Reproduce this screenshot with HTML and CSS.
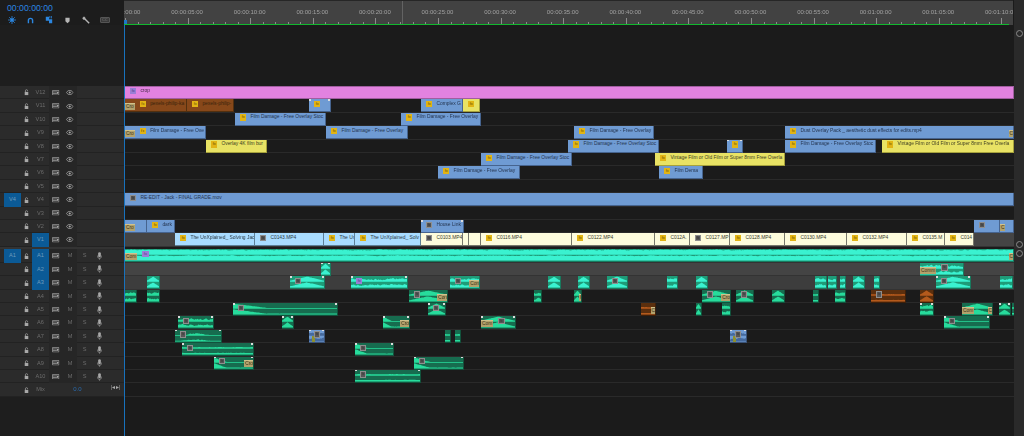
FILE: index.html
```html
<!doctype html>
<html>
  <head>
    <meta charset="utf-8">
    <title>Timeline</title>
    <link rel="stylesheet" href="styles.css">
  </head>
  <body>
    <svg class="sprites" width="0" height="0">
      <symbol id="i_lock" viewBox="0 0 7 9">
        <path d="M2 4.5V2.4a1.5 1.5 0 0 1 3 0V3" fill="none" stroke="currentColor"/>
        <rect x="1" y="4" width="5" height="4.6" fill="currentColor"/>
      </symbol>
      <symbol id="i_film" viewBox="0 0 9 7">
        <path d="M.5 .5h8v6h-8zM.5 2.5h5.5M.5 4.5h5.5" fill="none" stroke="currentColor" stroke-width=".9"/>
        <path d="M6 1.5l2.5 2-2.5 2z" fill="currentColor"/>
      </symbol>
      <symbol id="i_eye" viewBox="0 0 9 6">
        <path d="M.5 3C2 1 3 .5 4.5 .5S7 1 8.5 3C7 5 6 5.5 4.5 5.5S2 5 .5 3z" fill="none" stroke="currentColor"/>
        <circle cx="4.5" cy="3" r="1.3" fill="currentColor"/>
      </symbol>
      <symbol id="i_mic" viewBox="0 0 6 9">
        <rect x="1.4" y="0" width="3.2" height="6" rx="1.5" fill="currentColor"/>
        <path d="M.6 4v1a2.4 2.4 0 0 0 4.8 0V4M3 7.4V9" fill="none" stroke="currentColor" stroke-width=".7"/>
      </symbol>
    </svg>

    <div class="timeline">
      <div class="ctl">
        <div class="timecode">00:00:00:00</div>
        <div class="tools">
          <svg class="tool tool_big on" viewBox="0 0 10 10"><path d="M5 0v10M0 5h10M1.5 1.5l7 7M8.5 1.5l-7 7" stroke="currentColor" fill="none"/><rect x="3" y="3" width="4" height="4" fill="currentColor"/></svg>
          <svg class="tool on" viewBox="0 0 10 10"><path d="M2 9V5a3 3 0 0 1 6 0v4" stroke="currentColor" stroke-width="2" fill="none"/></svg>
          <svg class="tool tool_big on" viewBox="0 0 10 10"><path d="M1 1h4v5H1zM5 4h4v5H5z" fill="currentColor"/><path d="M6 0v3M8 0v3" stroke="currentColor"/></svg>
          <svg class="tool" viewBox="0 0 10 10"><path d="M2 1h6v5L5 9 2 6z" fill="currentColor"/></svg>
          <svg class="tool tool_big" viewBox="0 0 10 10"><path d="M1 2.5L2.5 1 4 2.5 3 4 1.5 4z" fill="currentColor" stroke="currentColor"/><path d="M3 3l6 6" stroke="currentColor" stroke-width="1.8"/></svg>
          <span class="tool_cc">CC</span>
        </div>
      </div>
      <div class="ruler">
        <div class="ruler_labels" id="ruler_labels"></div>
        <div class="work_mark"></div>
        <div class="ruler_ticks"></div>
        <div class="in_bar"></div>
        <div class="head_mark"></div>
      </div>
      <div class="vbar_top"></div>

      <div class="heads" id="heads"></div>
      <div class="lanes" id="lanes">
        <div class="playhead"></div>
      </div>
      <div class="vbar">
        <span class="knob knob_a"></span>
        <span class="knob knob_b"></span>
        <span class="knob knob_c"></span>
      </div>
    </div>
    <script src="timeline.js"></script>
  </body>
</html>
```

FILE: styles.css
```css
body {
  margin: 0;
  background: #1b1b1b;
  font-family: 'Liberation Sans', Arial, sans-serif;
  overflow: hidden;
}
.sprites {
  position: absolute;
}
.timeline {
  position: relative;
  display: grid;
  grid-template-columns: 124px 890px 10px;
  grid-template-rows: 25px 411px;
  height: 436px;
  overflow: hidden;
  filter: blur(0.3px);
}

/* top left controls */
.ctl {
  background: #1c1c1c;
  padding: 4px 0 0 7px;
}
.timecode {
  font-size: 8.7px;
  line-height: 9px;
  color: #2b86e0;
}
.tools {
  display: flex;
  align-items: center;
  gap: 11.6px;
  margin: 3px 0 0 1px;
}
.tool {
  width: 7px;
  height: 7px;
  color: #b5b5b5;
}
.tool_big {
  width: 8px;
  height: 8px;
  margin: 0 -0.5px;
}
.tool.on {
  color: #2b86e0;
}
.tool_cc {
  border: 1px solid #555;
  border-radius: 1px;
  background: #3a3a3a;
  color: #777;
  font-size: 4px;
  line-height: 4px;
  padding: 0 1px;
  margin-left: -1px;
}

/* ruler */
.ruler {
  position: relative;
  background: #424242;
  border-top: 1px solid #262626;
  overflow: hidden;
  margin-right: 1px;
}
.ruler_labels {
  display: flex;
  margin: 8px 0 0 -30.8px;
}
.ruler_labels span {
  flex: 0 0 62.6px;
  text-align: center;
  font-size: 6px;
  line-height: 7px;
  color: #a2a2a2;
}
.ruler_ticks {
  position: absolute;
  left: 0;
  right: 0;
  bottom: 1px;
  height: 6px;
  background-image:
    repeating-linear-gradient(90deg, #8c8c8c 0 1px, transparent 1px 62.6px),
    repeating-linear-gradient(90deg, #8c8c8c 0 1px, transparent 1px 12.52px);
  background-size: 100% 6px, 100% 2.5px;
  background-position: 0.5px 0, 0.5px bottom;
  background-repeat: no-repeat;
}
.in_bar {
  position: absolute;
  left: 0;
  right: 4px;
  bottom: 0;
  height: 1px;
  background: #12b82f;
}
.work_mark {
  position: absolute;
  left: 278px;
  top: 0;
  bottom: 1px;
  width: 1px;
  background: #636363;
}
.head_mark {
  position: absolute;
  left: 0;
  bottom: 1px;
  width: 3px;
  height: 4px;
  background: #1e78c8;
}

/* track headers */
.heads {
  padding-top: 61px;
  background: #1e1e1e;
}
.head {
  display: grid;
  grid-template-columns: 4px 17px 11px 17px 14px 14px 15px 14px 18px;
  height: 13.4px;
  background: #2b2b2b;
  box-shadow: inset 0 -1px 0 #222;
  color: #6c6c6c;
  font-size: 5.6px;
  line-height: 13px;
  text-align: center;
}
.head_gap {
  height: 2.7px;
  background: #333;
}
.cell {
  display: flex;
  align-items: center;
  justify-content: center;
}
.cell svg {
  color: #a8a8a8;
}
.cell_dim {
  background: #262626;
}
.patch {
  background: #0b5a96;
  color: #6f9cbd;
}
.ic_lock {
  width: 5px;
  height: 6.5px;
}
.ic_film {
  width: 7.5px;
  height: 5.5px;
}
.ic_eye {
  width: 7.5px;
  height: 5px;
}
.ic_mic {
  width: 5px;
  height: 8px;
}
.mix_val {
  grid-column: span 2;
  color: #2a6cb0;
  font-size: 6px;
}
.mix_end {
  color: #aaa;
  font-size: 5px;
  line-height: 8px;
  white-space: nowrap;
  letter-spacing: -1px;
}

/* lanes and clips */
.lanes {
  position: relative;
  padding-top: 61px;
  overflow: hidden;
}
.lane {
  position: relative;
  height: 13.4px;
  box-shadow: inset 0 -1px 0 #2a2a2a;
}
.lane_on {
  background: #444;
  box-shadow: inset 0 -1px 0 #333;
}
.lane_a3 {
  background: #3d3d3d;
}
.lane_gap {
  height: 2.7px;
}
.clip {
  position: absolute;
  top: 0;
  bottom: 0.4px;
  box-sizing: border-box;
  display: flex;
  align-items: flex-start;
  gap: 4px;
  padding: 1.6px 0 0 5px;
  border: solid transparent;
  border-width: 0 1px 1px 0;
  font-size: 4.9px;
  line-height: 6px;
  white-space: nowrap;
  overflow: hidden;
  color: #24344f;
}
.clip_blue {
  background: #6f9bd3;
  border-color: #46648f;
}
.clip_brown {
  background: #87481a;
  border-color: #53300f;
  color: #3a230c;
}
.clip_yellow {
  background: #e8e264;
  border-color: #a5a13c;
  color: #3c3c22;
}
.clip_sky {
  background: #a9dcff;
  border-color: #5e7f96;
  color: #2c3a44;
}
.clip_cream {
  background: #fdfcdc;
  border-color: #77776a;
  color: #3a3a2c;
}
.clip_pink {
  background: #e282e0;
  border-color: #a05ea0;
  border-top: 1px solid #a05ea0;
  color: #4a2a4a;
  padding-top: 1px;
}
.clip_wave {
  background: #176c4f;
  border-color: #12523c;
  color: #27dc9c;
}
.clip_hot {
  background: #1f9b78;
  border-color: #187a5e;
  color: #3af2d0;
}
.clip_orange {
  background: #5b2f0e;
  border-color: #3e200a;
  color: #b55a1c;
}
.clip_audioblue {
  background: #6f9bd3;
  border-color: #3c5478;
  color: #45699c;
}
.wave {
  position: absolute;
  left: 0;
  top: 0;
  width: 100%;
  height: 100%;
}
.wave path {
  fill: currentColor;
}
.badge {
  position: relative;
  flex: none;
  width: 6.4px;
  height: 6.4px;
  box-sizing: border-box;
  background: #e2b414;
  color: #6a5208;
  font-size: 4px;
  line-height: 6px;
  text-align: center;
}
.badge_grey {
  background: #565656;
  border: 1px solid #8e8e8e;
  color: #2e2e2e;
  font-size: 3px;
  line-height: 4px;
}
.badge_purple {
  background: #9a7ed6;
  color: #4e3b80;
}
.tag {
  position: relative;
  flex: none;
  background: #b3a26c;
  color: #3b3318;
  font-size: 4.8px;
  line-height: 6px;
  height: 6px;
  margin: 2.4px 1px 0 -5px;
  padding: 0 1px;
  border-top: 1px solid #d0c28c;
}
.tag_end {
  margin: 2.4px -1px 0 auto;
}
.label {
  position: relative;
}
.dot_l,
.dot_r {
  position: absolute;
  top: 0;
  width: 1.6px;
  height: 1.6px;
  background: #dcdcdc;
}
.dot_l {
  left: 0;
}
.dot_r {
  right: 0;
}
.olive {
  position: absolute;
  left: 3px;
  top: 6px;
  width: 3px;
  height: 6px;
  background: #8d9130;
}
.playhead {
  position: absolute;
  left: 0;
  top: 0;
  bottom: 0;
  width: 1px;
  background: #1872bd;
  z-index: 2;
}

/* right scrollbar */
.vbar {
  position: relative;
  background: #2a2a2a;
}
.vbar_top {
  background: #2a2a2a;
}
.knob {
  position: absolute;
  left: 1.5px;
  width: 5px;
  height: 5px;
  border: 1px solid #8a8a8a;
  border-radius: 50%;
}
.knob_a {
  top: 5px;
}
.knob_b {
  top: 216px;
}
.knob_c {
  top: 225px;
}
```

FILE: timeline.js
```js
// clip: [from x, to x, colour, badge, label, left tag, right tag, corner dots]
const video_tracks = [
  ['V12', [[125, 1014, 'pink', 'purple', 'crop']]],
  ['V11', [
    [125, 187, 'brown', 'fx', 'pexels-philip-ka', 'Cro'],
    [187, 234, 'brown', 'fx', 'pexels-philip-'],
    [309, 331, 'blue', 'fx', '', '', '', 1],
    [421, 463, 'blue', 'fx', 'Complex G'],
    [463, 480, 'yellow', 'fx', ''],
  ]],
  ['V10', [
    [235, 326, 'blue', 'fx', 'Film Damage - Free Overlay Stoc'],
    [401, 481, 'blue', 'fx', 'Film Damage - Free Overlay'],
  ]],
  ['V9', [
    [125, 206, 'blue', 'fx', 'Film Damage - Free Ove', 'Cro'],
    [326, 408, 'blue', 'fx', 'Film Damage - Free Overlay'],
    [574, 654, 'blue', 'fx', 'Film Damage - Free Overlay'],
    [785, 1014, 'blue', 'fx', 'Dust Overlay Pack _ aesthetic dust effects for edits.mp4', '', 'C'],
  ]],
  ['V8', [
    [206, 267, 'yellow', 'fx', 'Overlay 4K film bur'],
    [568, 659, 'blue', 'fx', 'Film Damage - Free Overlay Stoc'],
    [727, 743, 'blue', 'fx', '', '', '', 1],
    [785, 876, 'blue', 'fx', 'Film Damage - Free Overlay Stoc'],
    [882, 1014, 'yellow', 'fx', 'Vintage Film or Old Film or Super 8mm Free Overla'],
  ]],
  ['V7', [
    [481, 572, 'blue', 'fx', 'Film Damage - Free Overlay Stoc'],
    [655, 785, 'yellow', 'fx', 'Vintage Film or Old Film or Super 8mm Free Overla'],
  ]],
  ['V6', [
    [438, 520, 'blue', 'fx', 'Film Damage - Free Overlay'],
    [659, 703, 'blue', 'fx', 'Film Dema'],
  ]],
  ['V5', []],
  ['V4', [[125, 1014, 'blue', 'grey', 'RE-EDIT - Jack - FINAL GRADE.mov']]],
  ['V3', []],
  ['V2', [
    [125, 147, 'blue', '', '', 'Cro'],
    [147, 175, 'blue', 'fx', 'dark'],
    [421, 464, 'blue', 'grey', 'House Link', '', '', 1],
    [974, 1000, 'blue', 'grey', ''],
    [1000, 1014, 'blue', '', '', 'C'],
  ]],
  ['V1', [
    [175, 255, 'sky', 'fx', 'The UnXplained_ Solving Jac'],
    [255, 324, 'sky', 'grey', 'C0143.MP4'],
    [324, 355, 'sky', 'fx', 'The Un'],
    [355, 421, 'sky', 'fx', 'The UnXplained_ Solv'],
    [421, 463, 'cream', 'grey', 'C0103.MP4'],
    [463, 469, 'cream', '', ''],
    [469, 481, 'cream', '', ''],
    [481, 572, 'cream', 'fx', 'C0116.MP4'],
    [572, 655, 'cream', 'fx', 'C0122.MP4'],
    [655, 690, 'cream', 'fx', 'C012A.'],
    [690, 730, 'cream', 'grey', 'C0127.MP'],
    [730, 785, 'cream', 'fx', 'C0128.MP4'],
    [785, 847, 'cream', 'fx', 'C0130.MP4'],
    [847, 907, 'cream', 'fx', 'C0132.MP4'],
    [907, 945, 'cream', 'fx', 'C0135.M'],
    [945, 974, 'cream', 'fx', 'C014'],
  ]],
];

// clip: [from x, to x, wave kind, badge, left tag, right tag, corner dots, colour]
const audio_tracks = [
  ['A1', [[125, 1014, 'full', 'purple', 'Com', 'C']]],
  ['A2', [
    [321, 331, 'peak', '', '', '', 1],
    [920, 964, 'noisy', 'grey', 'Comm'],
  ]],
  ['A3', [
    [147, 160, 'peak'],
    [290, 325, 'peak', 'grey', '', '', 1],
    [351, 408, 'noisy', 'purple', '', '', 1],
    [450, 480, 'noisy', 'grey', '', 'Con'],
    [548, 561, 'peak'],
    [578, 590, 'peak'],
    [607, 628, 'peak', 'grey'],
    [667, 678, 'noisy'],
    [696, 708, 'peak'],
    [815, 827, 'noisy'],
    [828, 837, 'noisy'],
    [840, 846, 'noisy'],
    [853, 865, 'peak'],
    [874, 880, 'noisy'],
    [936, 971, 'peak', 'grey', '', '', 1],
    [1000, 1013, 'noisy'],
  ]],
  ['A4', [
    [125, 137, 'noisy'],
    [147, 160, 'noisy'],
    [409, 448, 'peak', 'grey', '', 'Con'],
    [534, 542, 'noisy'],
    [574, 582, 'peak', '', '', 'Ko'],
    [702, 731, 'peak', 'grey', '', 'Cro'],
    [736, 754, 'peak', 'grey'],
    [772, 785, 'peak'],
    [813, 815, 'flat'],
    [835, 846, 'noisy'],
    [871, 906, 'flat', 'grey', '', '', 0, 'orange'],
    [920, 934, 'peak', '', '', '', 0, 'orange'],
  ]],
  ['A5', [
    [233, 338, 'decay', 'grey', '', '', 1],
    [428, 446, 'peak', 'grey', '', '', 1],
    [641, 656, 'flat', '', '', 'C', 0, 'orange'],
    [696, 702, 'peak'],
    [722, 731, 'noisy'],
    [920, 934, 'noisy', '', '', '', 1],
    [962, 993, 'peak', '', 'Com', 'C'],
    [999, 1011, 'peak', '', '', '', 1],
    [1012, 1014, 'flat'],
  ]],
  ['A6', [
    [178, 214, 'noisy', 'grey', '', '', 1],
    [282, 294, 'peak', '', '', '', 1],
    [383, 410, 'decay', '', '', 'Cro', 1],
    [481, 516, 'peak', 'grey', 'Com', '', 1],
    [944, 990, 'decay', 'grey', '', '', 1],
  ]],
  ['A7', [
    [175, 222, 'low', 'grey', '', '', 1],
    [309, 325, 'noisy', 'grey', '', '', 1, 'audioblue'],
    [445, 448, 'flat'],
    [455, 459, 'flat'],
    [730, 747, 'noisy', 'grey', '', '', 1, 'audioblue'],
  ]],
  ['A8', [
    [182, 254, 'flat', 'grey', '', '', 1],
    [355, 394, 'decay', 'grey', '', '', 1],
  ]],
  ['A9', [
    [214, 254, 'decay', 'grey', '', 'Cro', 1],
    [414, 464, 'decay', 'grey', '', '', 1],
  ]],
  ['A10', [[355, 421, 'flat', 'grey', '', '', 1]]],
];

const lane_left = 124;
const heads = document.getElementById('heads');
const lanes = document.getElementById('lanes');

function el(cls, text) {
  const node = document.createElement('div');
  node.className = cls;
  if (text) node.textContent = text;
  return node;
}

function icon(name) {
  const box = el('cell');
  box.innerHTML = '<svg class="ic_' + name + '"><use href="#i_' + name + '"/></svg>';
  return box;
}

function head_row(name, source, target) {
  const row = el('head');
  row.appendChild(el(''));
  row.appendChild(el(source ? 'patch' : '', source ? name : ''));
  row.appendChild(icon('lock'));
  row.appendChild(el(target ? 'patch' : '', name));
  const film = icon('film');
  film.classList.add('cell_dim');
  row.appendChild(film);
  if (name[0] == 'V') {
    const eye = icon('eye');
    eye.classList.add('cell_dim');
    row.appendChild(eye);
  } else {
    row.appendChild(el('cell_dim', 'M'));
    row.appendChild(el('', 'S'));
    row.appendChild(icon('mic'));
  }
  heads.appendChild(row);
}

function add_badge(clip, kind) {
  if (!kind) return;
  const grey = kind == 'grey';
  clip.appendChild(el('badge' + (grey ? ' badge_grey' : kind == 'purple' ? ' badge_purple' : ''), 'fx'));
}

function add_dots(clip) {
  clip.appendChild(el('dot_l'));
  clip.appendChild(el('dot_r'));
}

function place(clip, from, to) {
  clip.style.left = (from - lane_left) + 'px';
  clip.style.width = (to - from) + 'px';
}

function video_clip(spec) {
  const [from, to, colour, badge, label, tag_l, tag_r, dots] = spec;
  const clip = el('clip clip_' + colour);
  place(clip, from, to);
  if (tag_l) clip.appendChild(el('tag', tag_l));
  add_badge(clip, badge);
  if (label) clip.appendChild(el('label', label));
  if (tag_r) clip.appendChild(el('tag tag_end', tag_r));
  if (dots) add_dots(clip);
  return clip;
}

function amp(kind, t, r) {
  if (kind == 'peak') return 0.2 + 0.8 * (1 - Math.abs(2 * t - 1)) * (0.8 + 0.2 * r);
  if (kind == 'decay') return Math.max(0.16, 1 - t * 2.6) * (0.85 + 0.15 * r);
  if (kind == 'flat') return 0.24 + 0.08 * r;
  if (kind == 'low') return 0.12 + 0.5 * Math.max(0, 1 - Math.abs(t - 0.45) * 3) * r;
  if (kind == 'full') return 0.72 + 0.28 * r;
  return 0.2 + 0.55 * r;
}

function wave_path(kind, w, seed) {
  let n = seed * 7 + 13;
  let smooth = 0.5;
  const rand = function () {
    n = (n * 1103 + 12345) % 65536;
    smooth = (smooth + n / 65536) / 2;
    return smooth;
  };
  const ch = 6;
  let d = '';
  [6.2, 12.4].forEach(function (base) {
    d += 'M0 ' + base;
    for (let x = 0; x <= w; x += 1) {
      d += 'L' + x + ' ' + (base - amp(kind, x / w, rand()) * ch).toFixed(1);
    }
    d += 'L' + w + ' ' + base + 'z';
  });
  return d;
}

function audio_clip(spec, row) {
  const [from, to, kind, badge, tag_l, tag_r, dots, colour] = spec;
  const tone = colour || (row < 3 ? 'hot' : 'wave');
  const clip = el('clip clip_' + tone);
  const w = to - from;
  place(clip, from, to);
  clip.innerHTML = '<svg class="wave" viewBox="0 0 ' + w + ' 13" preserveAspectRatio="none"><path d="' + wave_path(kind, w, from) + '"/></svg>';
  if (colour == 'audioblue') clip.appendChild(el('olive'));
  if (tag_l) clip.appendChild(el('tag', tag_l));
  add_badge(clip, badge);
  if (tag_r) clip.appendChild(el('tag tag_end', tag_r));
  if (dots) add_dots(clip);
  return clip;
}

video_tracks.forEach(function (track) {
  const name = track[0];
  head_row(name, name == 'V4', name == 'V1');
  const lane = el(name == 'V1' ? 'lane lane_on' : 'lane');
  track[1].forEach(function (spec) {
    lane.appendChild(video_clip(spec));
  });
  lanes.appendChild(lane);
});

heads.appendChild(el('head_gap'));
lanes.appendChild(el('lane_gap'));

audio_tracks.forEach(function (track, i) {
  const name = track[0];
  head_row(name, name == 'A1', i < 3);
  const lane = el(i < 3 ? 'lane lane_on' + (i == 2 ? ' lane_a3' : '') : 'lane');
  track[1].forEach(function (spec) {
    lane.appendChild(audio_clip(spec, i));
  });
  lanes.appendChild(lane);
});

const mix = el('head');
mix.appendChild(el(''));
mix.appendChild(el(''));
mix.appendChild(icon('lock'));
mix.appendChild(el('', 'Mix'));
mix.appendChild(el(''));
mix.appendChild(el('mix_val', '0.0'));
mix.appendChild(el(''));
mix.appendChild(el('mix_end', '|◄►|'));
heads.appendChild(mix);
lanes.appendChild(el('lane'));

const labels = document.getElementById('ruler_labels');
for (let s = 0; s <= 70; s += 5) {
  const span = document.createElement('span');
  const mm = Math.floor(s / 60);
  const ss = s % 60;
  span.textContent = '00:0' + mm + ':' + (ss < 10 ? '0' : '') + ss + ':00';
  labels.appendChild(span);
}
```
